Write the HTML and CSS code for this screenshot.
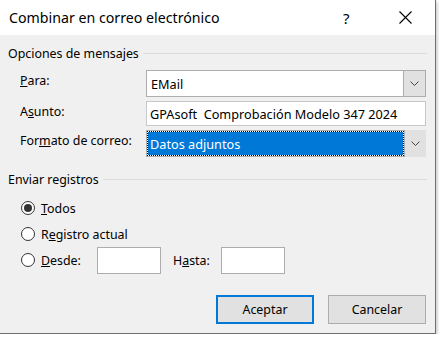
FILE: index.html
```html
<!DOCTYPE html>
<html lang="es">
<head>
    <meta charset="UTF-8">
    <title>Combinar en correo electrónico</title>
    <link rel="stylesheet" href="styles.css">
</head>
<body>
    <div class="dialog">
        <div class="titlebar">
            <span class="title">Combinar en correo electrónico</span>
            <span class="help">?</span>
            <span class="close">
                <svg width="13" height="13" viewBox="0 0 13 13"><path d="M0.5 0.5 L12.5 12.5 M12.5 0.5 L0.5 12.5" stroke="#000" stroke-width="1.1" fill="none"/></svg>
            </span>
        </div>
        <div class="content">
            <div class="group-title"><span>Opciones de mensajes</span></div>
            <div class="fields">
                <label><u>P</u>ara:</label>
                <div class="select para">
                    <span class="value">EMail</span>
                    <span class="arrow"><svg width="9" height="5" viewBox="0 0 9 5"><path d="M0.5 0.5 L4.5 4.5 L8.5 0.5" stroke="#444" fill="none"/></svg></span>
                </div>
                <label>A<u>s</u>unto:</label>
                <div class="textbox">GPAsoft&nbsp; Comprobación Modelo 347 2024</div>
                <label>For<u>m</u>ato de correo:</label>
                <div class="select formato">
                    <span class="value selected">Datos adjuntos</span>
                    <span class="arrow"><svg width="9" height="5" viewBox="0 0 9 5"><path d="M0.5 0.5 L4.5 4.5 L8.5 0.5" stroke="#444" fill="none"/></svg></span>
                </div>
            </div>
            <div class="group-title second"><span>Enviar registros</span></div>
            <div class="radios">
                <div class="radio-row"><span class="radio checked"></span><span><u>T</u>odos</span></div>
                <div class="radio-row"><span class="radio"></span><span>R<u>e</u>gistro actual</span></div>
                <div class="radio-row">
                    <span class="radio"></span><span class="desde"><u>D</u>esde:</span>
                    <span class="small-box"></span>
                    <span class="hasta">H<u>a</u>sta:</span>
                    <span class="small-box"></span>
                </div>
            </div>
            <div class="buttons">
                <button class="btn default">Aceptar</button>
                <button class="btn">Cancelar</button>
            </div>
        </div>
    </div>
</body>
</html>
```

FILE: styles.css
```css
body {
    margin: 0;
    background-color: #fff;
    font-family: "Noto Sans", sans-serif;
    font-size: 12.4px;
    color: #000;
}
.dialog {
    width: 435px;
    height: 333px;
    border-right: 1px solid #6f6f6f;
    border-bottom: 1px solid #6f6f6f;
    box-shadow: 1px 2px 4px rgba(0, 0, 0, 0.25);
    display: flex;
    flex-direction: column;
}
.titlebar {
    height: 35px;
    background-color: #fff;
    display: flex;
    align-items: center;
    padding-left: 9px;
}
.title {
    font-size: 14.2px;
    flex: 1;
}
.help {
    font-size: 15px;
    width: 54px;
}
.close {
    width: 36px;
    padding-left: 2px;
    display: flex;
}
.content {
    flex: 1;
    background-color: #f0f0f0;
    padding: 10px 8px 0 8px;
}
.group-title {
    display: flex;
    align-items: center;
    height: 16px;
}
.group-title::after {
    content: "";
    flex: 1;
    border-top: 1px solid #dcdcdc;
    margin-left: 4px;
}
.group-title.second {
    margin-top: 14px;
}
.fields {
    display: grid;
    grid-template-columns: 126px 280px;
    row-gap: 4px;
    padding-left: 12px;
    margin-top: 9px;
    align-items: start;
}
.fields label {
    padding-top: 2px;
}
.select {
    height: 27px;
    box-sizing: border-box;
    border: 1px solid #adadad;
    background-color: #fff;
    display: flex;
    align-items: stretch;
}
.select .value {
    flex: 1;
    display: flex;
    align-items: center;
    padding-left: 4px;
    font-size: 12.7px;
}
.select.formato {
    padding: 1px;
}
.select .value.selected {
    background-color: #0078d7;
    color: #fff;
    outline: 1px dotted #000;
    padding-left: 2px;
}
.arrow {
    width: 21px;
    background-color: #e1e1e1;
    border-left: 1px solid #adadad;
    display: flex;
    align-items: center;
    justify-content: center;
}
.select.formato .arrow {
    margin: -2px -2px -2px 1px;
}
.textbox {
    height: 25px;
    box-sizing: border-box;
    border: 1px solid #c8c8c8;
    background-color: #fff;
    padding-left: 3px;
    display: flex;
    align-items: center;
    font-size: 12.7px;
}
.radios {
    padding-left: 13px;
    margin-top: 11px;
    display: flex;
    flex-direction: column;
    gap: 6px;
}
.radio-row {
    display: flex;
    align-items: center;
    height: 20px;
}
.radio {
    width: 12px;
    height: 12px;
    border: 1px solid #333;
    border-radius: 50%;
    background-color: #fff;
    margin-right: 6px;
    position: relative;
}
.radio.checked::after {
    content: "";
    position: absolute;
    left: 2px;
    top: 2px;
    width: 8px;
    height: 8px;
    border-radius: 50%;
    background-color: #333;
}
.desde {
    width: 56px;
}
.small-box {
    width: 64px;
    height: 27px;
    box-sizing: border-box;
    border: 1px solid #adadad;
    background-color: #fff;
}
.hasta {
    margin-left: 12px;
    width: 48px;
}
.buttons {
    display: flex;
    justify-content: flex-end;
    gap: 14px;
    margin-top: 25px;
    padding-right: 1px;
}
.btn {
    width: 98px;
    height: 29px;
    box-sizing: border-box;
    border: 1px solid #adadad;
    background-color: #e1e1e1;
    font-family: "Noto Sans", sans-serif;
    font-size: 12.4px;
    color: #000;
    padding: 0;
}
.btn.default {
    border: 2px solid #0078d7;
}
```
